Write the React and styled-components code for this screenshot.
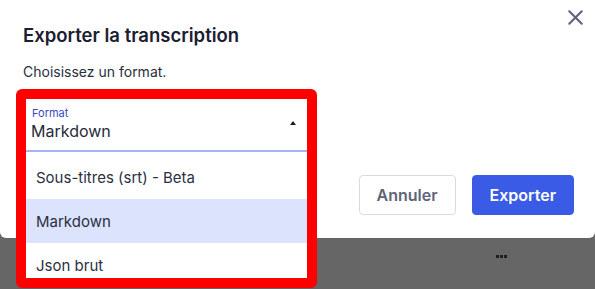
import React from 'react';
import styled, { createGlobalStyle } from 'styled-components';
import { X } from 'lucide-react';

const GlobalStyle = createGlobalStyle`
  html, body {
    margin: 0;
    padding: 0;
    background: #666666;
    font-family: Inter, "Noto Sans", sans-serif;
  }
  #root {
    height: 289px;
    overflow: hidden;
    position: relative;
  }
`;

// Dialog panel, top cut off by the screenshot
const Dialog = styled.div`
  position: relative;
  height: 238px;
  box-sizing: border-box;
  background: #ffffff;
  border-radius: 0 0 6px 6px;
  padding: 23px 21px 23px 23px;
  display: flex;
  flex-direction: column;
`;

const Title = styled.h2`
  margin: 0;
  font-size: 18.5px;
  line-height: 24px;
  font-weight: 600;
  color: #1b2030;
`;

const Hint = styled.p`
  margin: 15px 0 0;
  font-size: 14px;
  line-height: 20px;
  color: #2a2f3d;
`;

const CloseButton = styled.button`
  position: absolute;
  top: 5px;
  right: 7px;
  padding: 0;
  border: none;
  background: none;
  color: #5d6378;
  display: flex;
  cursor: pointer;
`;

const Body = styled.div`
  flex: 1;
  margin-top: 17px;
  display: flex;
  justify-content: space-between;
`;

const SelectWrap = styled.div`
  position: relative;
  width: 283px;
  margin-left: 3px;
  align-self: flex-start;
`;

const Field = styled.div`
  position: relative;
  height: 53px;
  box-sizing: border-box;
  padding: 7px 5px 0 5px;
  border-bottom: 2px solid #a3b3f3;
  background: #ffffff;
`;

const Label = styled.div`
  font-size: 11px;
  line-height: 14px;
  color: #3a4bc0;
  padding-left: 1px;
`;

const Value = styled.div`
  font-size: 16px;
  line-height: 22px;
  color: #262b38;
`;

const Caret = styled.span`
  position: absolute;
  right: 13px;
  top: 22px;
  width: 0;
  height: 0;
  border-left: 3.5px solid transparent;
  border-right: 3.5px solid transparent;
  border-bottom: 4px solid #1d1d1d;
`;

// Opened listbox, overlays the dialog edge
const Menu = styled.ul`
  position: absolute;
  top: 53px;
  left: 0;
  right: 0;
  margin: 0;
  padding: 3px 0 0;
  list-style: none;
  background: #ffffff;
  z-index: 2;
`;

const Option = styled.li`
  height: 44px;
  display: flex;
  align-items: center;
  padding-left: 10px;
  font-size: 15px;
  color: #2b3040;
  background: ${p => (p.$active ? '#dce3fd' : '#ffffff')};
`;

const Actions = styled.div`
  align-self: flex-end;
  display: flex;
  gap: 16px;
`;

const Button = styled.button`
  height: 40px;
  box-sizing: border-box;
  border-radius: 4px;
  padding: 0 17px;
  font-family: inherit;
  font-size: 16px;
  font-weight: 600;
  cursor: pointer;
  border: 1px solid ${p => (p.$primary ? '#3a5be6' : '#d7dbe4')};
  background: ${p => (p.$primary ? '#3a5be6' : '#ffffff')};
  color: ${p => (p.$primary ? '#ffffff' : '#5f6577')};
`;

// Red annotation frame drawn over the select
const Highlight = styled.div`
  position: absolute;
  left: 16px;
  top: 89px;
  width: 301px;
  height: 199px;
  box-sizing: border-box;
  border: 10px solid #ff0000;
  border-radius: 6px;
  z-index: 3;
  pointer-events: none;
`;

const Backdrop = styled.div`
  display: flex;
  justify-content: flex-end;
  padding: 17px 88px 0 0;
`;

const Dots = styled.span`
  display: flex;
  gap: 1px;
`;

const Dot = styled.i`
  width: 3px;
  height: 3px;
  background: #1e1e1e;
`;

const options = ['Sous-titres (srt) - Beta', 'Markdown', 'Json brut'];

const App = () => {
  const selected = 'Markdown';
  return (
    <>
      <GlobalStyle />
      <Dialog>
        <Title>Exporter la transcription</Title>
        <Hint>Choisissez un format.</Hint>
        <CloseButton aria-label="Fermer">
          <X size={25} strokeWidth={2} />
        </CloseButton>
        <Body>
          <SelectWrap>
            <Field>
              <Label>Format</Label>
              <Value>{selected}</Value>
              <Caret />
            </Field>
            <Menu>
              {options.map(opt => (
                <Option key={opt} $active={opt === selected}>
                  {opt}
                </Option>
              ))}
            </Menu>
          </SelectWrap>
          <Actions>
            <Button>Annuler</Button>
            <Button $primary>Exporter</Button>
          </Actions>
        </Body>
      </Dialog>
      <Backdrop>
        <Dots>
          <Dot />
          <Dot />
          <Dot />
        </Dots>
      </Backdrop>
      <Highlight />
    </>
  );
};

export default App;
